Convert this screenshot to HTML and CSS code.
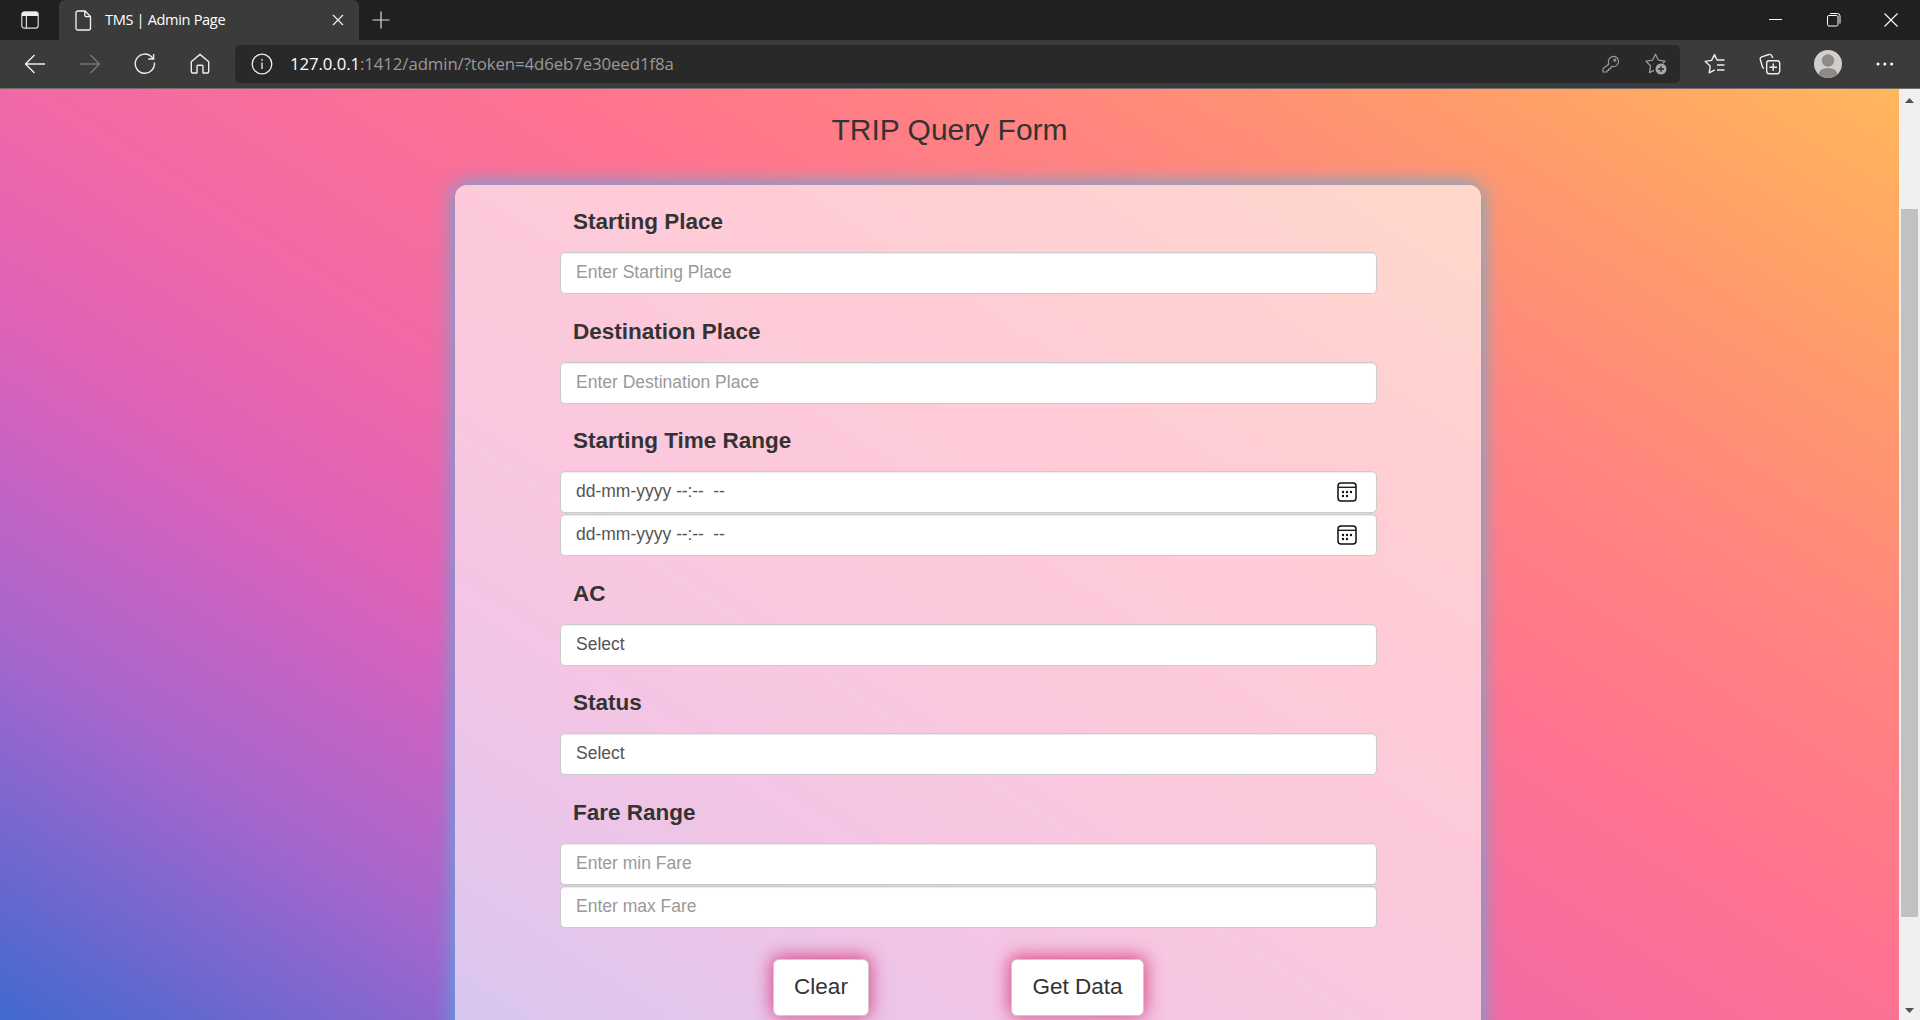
FILE: index.html
```html
<!DOCTYPE html>
<html lang="en">
<head>
<meta charset="utf-8">
<title>TMS | Admin Page</title>
<link rel="stylesheet" href="styles.css">
</head>
<body>
<header class="titlebar">
  <div class="tab-actions"><svg width="18" height="18" viewBox="0 0 18 18"><rect x=".8" y=".8" width="16.4" height="16.4" rx="2.6" fill="none" stroke="#ddd" stroke-width="1.2"/><path d="M1 5V3Q1 1 3 1H15Q17 1 17 3V5Z" fill="#eee"/><path d="M5.4 5V17" stroke="#ddd" stroke-width="1.2"/></svg></div>
  <div class="tab">
    <svg class="file" width="17" height="21" viewBox="0 0 17 21" fill="none" stroke="#f4f4f4" stroke-width="1.3"><path d="M3.2 1H10L15.5 6.5V18Q15.5 20 13.5 20H3Q1 20 1 18V3Q1 1 3.2 1ZM9.8 1V5Q9.8 6.7 11.5 6.7H15.5"/></svg>
    <span class="tab-title">TMS | Admin Page</span>
    <svg width="12" height="12" viewBox="0 0 12 12" stroke="#eee" stroke-width="1.2"><path d="M1 1L11 11M11 1L1 11"/></svg>
  </div>
  <svg class="plus" width="18" height="18" viewBox="0 0 18 18" stroke="#ddd" stroke-width="1.2"><path d="M9 .5V17.5M.5 9H17.5"/></svg>
  <div class="window-buttons">
    <svg width="14" height="14" viewBox="0 0 14 14" stroke="#fff" stroke-width="1"><path d="M0 6.5H13"/></svg>
    <svg width="14" height="14" viewBox="0 0 14 14" fill="none" stroke="#fff" stroke-width="1"><rect x=".5" y="2.5" width="10.5" height="10.5" rx="1.5"/><path d="M3 .5H10.5Q13 .5 13 3V10.5"/></svg>
    <svg width="14" height="14" viewBox="0 0 14 14" stroke="#fff" stroke-width="1.1"><path d="M.5 .5L13.5 13.5M13.5 .5L.5 13.5"/></svg>
  </div>
</header>
<nav class="toolbar">
  <div class="nav-buttons">
    <svg width="22" height="20" viewBox="0 0 22 20" fill="none" stroke="#eee" stroke-width="1.4"><path d="M21 10H1.5M10.5 1L1.5 10L10.5 19"/></svg>
    <svg width="22" height="20" viewBox="0 0 22 20" fill="none" stroke="#777" stroke-width="1.4"><path d="M1 10H20.5M11.5 1L20.5 10L11.5 19"/></svg>
    <svg width="22" height="22" viewBox="0 0 22 22" fill="none" stroke="#eee" stroke-width="1.4"><path d="M20.4 9.5A9.6 9.6 0 1 1 17 3.3L19.5 6M19.6 1V6H14.3"/></svg>
    <svg width="22" height="22" viewBox="0 0 22 22" fill="none" stroke="#eee" stroke-width="1.4" stroke-linejoin="round"><path d="M2.3 8.8L11 1.4L19.7 8.8V18.2Q19.7 20 18.2 20H14V13.3Q14 12.3 13 12.3H9Q8 12.3 8 13.3V20H3.8Q2.3 20 2.3 18.2Z"/></svg>
  </div>
  <div class="address">
    <svg width="22" height="22" viewBox="0 0 22 22" fill="none" stroke="#eee" stroke-width="1.3"><circle cx="11" cy="11" r="9.8"/><path d="M11 9.5V16M11 6V7.7"/></svg>
    <span class="url"><b>127.0.0.1</b>:1412/admin/?token=4d6eb7e30eed1f8a</span>
    <svg class="key" width="18" height="18" viewBox="0 0 18 18" fill="none" stroke="#999" stroke-width="1.2" stroke-linejoin="round"><path d="M7 9A5.1 5.1 0 1 1 10 11.4L8.5 12.5V14H6.6V15.5H5V17H1V13.7L7 9Z"/><circle cx="12.8" cy="5.2" r="1"/></svg>
    <svg width="22" height="22" viewBox="0 0 22 22" fill="none" stroke="#999" stroke-width="1.3" stroke-linejoin="round"><path d="M9 17.3L4.5 19.6L5.5 12.8L1 8.2L7.5 7.2L10.5 1.3L13.5 7.2L20 8.2L17.8 10.2"/><circle cx="16" cy="16" r="5.5" fill="#a8a8a8" stroke="none"/><path d="M16 13V19M13 16H19" stroke="#292929"/></svg>
  </div>
  <div class="extras">
    <svg width="22" height="22" viewBox="0 0 22 22" fill="none" stroke="#eee" stroke-width="1.4" stroke-linejoin="round"><path d="M10.8 16.8L5.2 19.8L6.2 13L1.2 8.4L7.6 7.4L10.5 1.6L13 7H20.5M13 12H20.5M13 17H20.5"/></svg>
    <svg width="22" height="22" viewBox="0 0 22 22" fill="none" stroke="#eee" stroke-width="1.4"><rect x="7.7" y="7.7" width="13" height="13" rx="2.4"/><path d="M14.2 10.5V18M10.5 14.2H18M5 15.5Q3.8 15 3.3 13.5L1.3 6.5Q.8 4.5 2.7 3.8L10 1.5Q12 1 13 3L13.6 5"/></svg>
    <svg width="28" height="28" viewBox="0 0 28 28"><circle cx="14" cy="14" r="14" fill="#d0cfcd"/><circle cx="14" cy="10.5" r="6.2" fill="#8d8a87"/><path d="M4.5 24.2Q6 18 14 18T23.5 24.2A14 14 0 0 1 4.5 24.2Z" fill="#8d8a87"/></svg>
    <svg width="18" height="6" viewBox="0 0 18 6" fill="#fff"><circle cx="2" cy="3" r="1.5"/><circle cx="8.8" cy="3" r="1.5"/><circle cx="15.6" cy="3" r="1.5"/></svg>
  </div>
</nav>
<div class="viewport">
<main class="page">
  <h1 class="heading">TRIP Query Form</h1>
  <form class="card">
    <label class="label">Starting Place</label>
    <div class="field hint">Enter Starting Place</div>
    <label class="label">Destination Place</label>
    <div class="field hint">Enter Destination Place</div>
    <label class="label">Starting Time Range</label>
    <div class="field"><span class="date">dd-mm-yyyy <span class="time">--:--&nbsp; --</span></span><svg class="calendar" width="20" height="20" viewBox="0 0 20 20"><rect x="1" y="1" width="18" height="18" rx="3" fill="none" stroke="#111" stroke-width="1.5"/><path d="M1 5.3H19" stroke="#111" stroke-width="1.3"/><g fill="#111"><circle cx="6" cy="10" r="1.2"/><circle cx="10" cy="10" r="1.2"/><circle cx="14" cy="10" r="1.2"/><circle cx="6" cy="14" r="1.2"/><circle cx="10" cy="14" r="1.2"/></g></svg></div>
    <div class="field"><span class="date">dd-mm-yyyy <span class="time">--:--&nbsp; --</span></span><svg class="calendar" width="20" height="20" viewBox="0 0 20 20"><rect x="1" y="1" width="18" height="18" rx="3" fill="none" stroke="#111" stroke-width="1.5"/><path d="M1 5.3H19" stroke="#111" stroke-width="1.3"/><g fill="#111"><circle cx="6" cy="10" r="1.2"/><circle cx="10" cy="10" r="1.2"/><circle cx="14" cy="10" r="1.2"/><circle cx="6" cy="14" r="1.2"/><circle cx="10" cy="14" r="1.2"/></g></svg></div>
    <label class="label">AC</label>
    <div class="field">Select</div>
    <label class="label">Status</label>
    <div class="field">Select</div>
    <label class="label">Fare Range</label>
    <div class="field hint">Enter min Fare</div>
    <div class="field hint">Enter max Fare</div>
    <div class="actions"><button class="btn clear" type="button">Clear</button><button class="btn get" type="button">Get Data</button></div>
  </form>
</main>
<div class="scrollbar">
  <svg width="9" height="5" viewBox="0 0 9 5"><path d="M0 5L4.5 0L9 5Z" fill="#505050"/></svg>
  <div class="thumb"></div>
  <svg width="9" height="5" viewBox="0 0 9 5"><path d="M0 0L4.5 5L9 0Z" fill="#505050"/></svg>
</div>
</div>
</body>
</html>
```
FILE: styles.css
```css
* { box-sizing: border-box; }
body { margin: 0; width: 1920px; height: 1020px; overflow: hidden; display: flex; flex-direction: column; background: #3b3b3b; font-family: "Liberation Sans", Arial, sans-serif; }
svg { display: block; flex: none; }
.titlebar { height: 40px; flex: none; display: flex; align-items: center; background: #202020; }
.tab-actions { width: 59px; height: 40px; display: flex; align-items: center; padding-left: 21px; border-radius: 0 0 6px 0; }
.tab { width: 300px; height: 40px; display: flex; align-items: center; padding: 0 15px 0 16px; background: #3b3b3b; border-radius: 6px 6px 0 0; color: #fff; }
.tab-title { flex: 1; margin: -3px 0 0 13px; font: 14.6px "Open Sans", sans-serif; letter-spacing: -0.35px; }
.plus { margin-left: 13px; }
.window-buttons { display: flex; gap: 43.5px; margin-left: auto; padding-right: 22px; }
.toolbar { height: 48px; flex: none; display: flex; align-items: center; padding-bottom: 1px; }
.nav-buttons { width: 235px; display: flex; gap: 33px; padding-left: 24px; align-items: center; }
.address { width: 1445px; height: 38px; display: flex; align-items: center; padding: 0 13px 0 16px; border-radius: 5px; background: #292929; }
.url { flex: 1; margin: -1px 0 0 17px; color: #999; font: 16.8px "Open Sans", sans-serif; letter-spacing: -0.09px; }
.url b { color: #fff; font-weight: 400; }
.key { margin-right: 25px; }
.extras { display: flex; align-items: center; margin-left: 24px; }
.extras svg:nth-child(2) { margin-left: 33px; }
.extras svg:nth-child(3) { margin-left: 33px; }
.extras svg:nth-child(4) { margin-left: 34px; }
.viewport { flex: 1; min-height: 0; display: flex; border-top: 1px solid #746c6c; }
.page { width: 1899px; overflow: hidden; background: linear-gradient(33deg, #4169d0 0%, #a466cd 17%, #c463c4 25%, #e062b7 33%, #f169a6 43.5%, #ff748f 60%, #ff867e 74%, #ff9b6b 86%, #ffb75c 100%); }
.heading { margin: 22px 0 0; height: 74px; color: #333; font-size: 30px; font-weight: 400; line-height: 38px; text-align: center; }
.card { width: 1026px; height: 900px; margin-left: 455px; padding: 13px 104px 0 105px; border-radius: 12px; background: rgba(255,255,255,.63); box-shadow: 0 0 20px 1px #56aee0; }
.label { display: block; height: 45px; margin: 0 0 9px 13px; color: #333; font-size: 22.5px; font-weight: 700; line-height: 47px; }
.field { height: 42px; margin-bottom: .7px; display: flex; align-items: center; justify-content: space-between; padding: 0 19px 1px 15px; border: 1px solid #ccc; border-radius: 5px; background: #fff; box-shadow: inset 0 1px 1px rgba(0,0,0,.08); color: #555; font-size: 17.5px; }
.field + .label { margin-top: 13.7px; }
.time { letter-spacing: -0.1px; }
.hint { color: #999; }
.actions { display: flex; margin: 31px 0 0 213px; }
.btn { height: 57px; padding: 0; border: 1px solid #ccc; border-radius: 6px; background: #fff; box-shadow: 0 -1px 17px 2px #d94c88; color: #333; font: 22.5px "Liberation Sans", Arial, sans-serif; }
.clear { width: 96px; }
.get { width: 133px; margin-left: 142px; }
.scrollbar { width: 21px; display: flex; flex-direction: column; align-items: center; background: #f0f0f0; padding: 9px 0 7px; }
.thumb { width: 17px; height: 708px; margin: 106px 0 auto; background: #c1c1c1; }
```
